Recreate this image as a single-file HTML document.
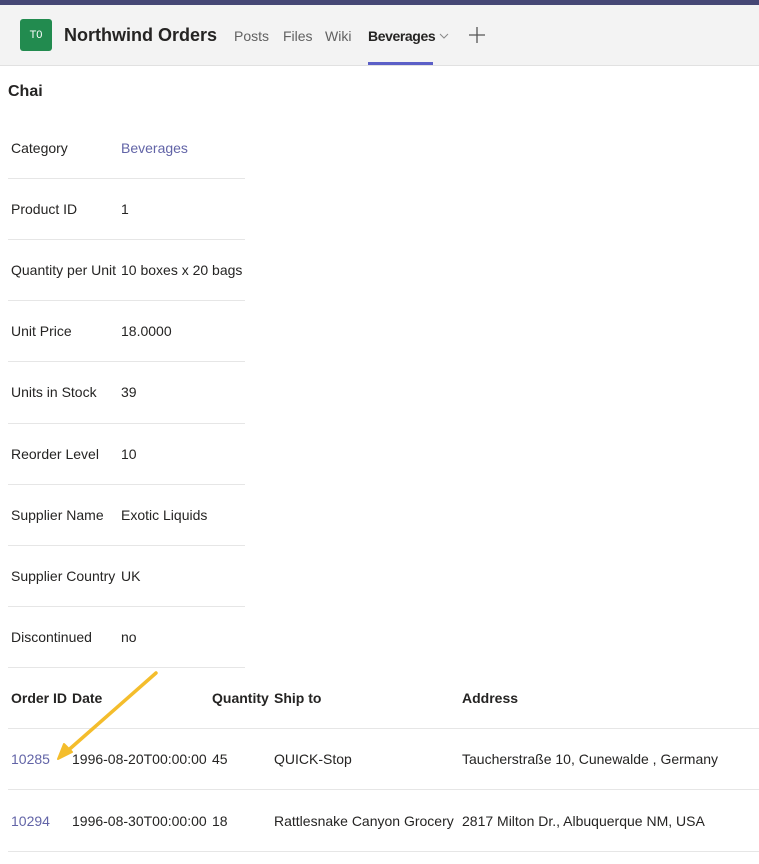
<!DOCTYPE html>
<html><head><meta charset="utf-8"><style>
body{margin:0;width:759px;height:864px;background:#fff;font-family:"Liberation Sans",Arial,sans-serif;position:relative;overflow:hidden;color:#252423}
.abs{position:absolute;white-space:nowrap}
.t{font-size:14px;line-height:16px}
.line{position:absolute;height:1px;background:#e6e6e6;left:8px}
.link{color:#6264a7}
.b{font-weight:bold}
</style></head><body>
<div class="abs" style="left:0;top:0;width:759px;height:5px;background:#464775"></div>
<div class="abs" style="left:0;top:5px;width:759px;height:60px;background:#f3f3f3;border-bottom:1px solid #e1e1e1"></div>
<div class="abs" style="left:20px;top:19px;width:32px;height:32px;background:#228b4f;border-radius:3px;color:#fff;font-size:11px;line-height:32px;text-align:center">T0</div>
<div class="abs b" style="left:64px;top:24px;font-size:18px;line-height:22px;color:#252423">Northwind Orders</div>
<div class="abs" style="left:234px;top:28px;font-size:14px;line-height:16px;color:#616161">Posts</div>
<div class="abs" style="left:283px;top:28px;font-size:14px;line-height:16px;color:#616161">Files</div>
<div class="abs" style="left:325px;top:28px;font-size:14px;line-height:16px;color:#616161">Wiki</div>
<div class="abs b" style="left:368px;top:28px;font-size:14px;line-height:16px;color:#252423;letter-spacing:-0.4px">Beverages</div>
<svg class="abs" style="left:439px;top:32px" width="10" height="8"><path d="M1 2 L5 6 L9 2" stroke="#888" fill="none" stroke-width="1"/></svg>
<svg class="abs" style="left:468px;top:26px" width="18" height="18"><path d="M9 1V17M1 9H17" stroke="#555" stroke-width="1.3"/></svg>
<div class="abs" style="left:368px;top:62px;width:65px;height:3px;background:#5b5fc7"></div>
<div class="abs b" style="left:8px;top:82px;font-size:16px;line-height:19px">Chai</div>

<div class="abs t" style="left:11px;top:140px">Category</div><div class="abs t link" style="left:121px;top:140px">Beverages</div>
<div class="line" style="top:178px;width:237px"></div>
<div class="abs t" style="left:11px;top:201px">Product ID</div><div class="abs t" style="left:121px;top:201px">1</div>
<div class="line" style="top:239px;width:237px"></div>
<div class="abs t" style="left:11px;top:262px">Quantity per Unit</div><div class="abs t" style="left:121px;top:262px">10 boxes x 20 bags</div>
<div class="line" style="top:300px;width:237px"></div>
<div class="abs t" style="left:11px;top:323px">Unit Price</div><div class="abs t" style="left:121px;top:323px">18.0000</div>
<div class="line" style="top:361px;width:237px"></div>
<div class="abs t" style="left:11px;top:384px">Units in Stock</div><div class="abs t" style="left:121px;top:384px">39</div>
<div class="line" style="top:423px;width:237px"></div>
<div class="abs t" style="left:11px;top:446px">Reorder Level</div><div class="abs t" style="left:121px;top:446px">10</div>
<div class="line" style="top:484px;width:237px"></div>
<div class="abs t" style="left:11px;top:507px">Supplier Name</div><div class="abs t" style="left:121px;top:507px">Exotic Liquids</div>
<div class="line" style="top:545px;width:237px"></div>
<div class="abs t" style="left:11px;top:568px">Supplier Country</div><div class="abs t" style="left:121px;top:568px">UK</div>
<div class="line" style="top:606px;width:237px"></div>
<div class="abs t" style="left:11px;top:629px">Discontinued</div><div class="abs t" style="left:121px;top:629px">no</div>
<div class="line" style="top:667px;width:237px"></div>

<div class="abs t b" style="left:11px;top:690px">Order ID</div>
<div class="abs t b" style="left:72px;top:690px">Date</div>
<div class="abs t b" style="left:212px;top:690px">Quantity</div>
<div class="abs t b" style="left:274px;top:690px">Ship to</div>
<div class="abs t b" style="left:462px;top:690px">Address</div>
<div class="line" style="top:728px;width:751px"></div>
<div class="abs t link" style="left:11px;top:751px">10285</div>
<div class="abs t" style="left:72px;top:751px">1996-08-20T00:00:00</div>
<div class="abs t" style="left:212px;top:751px">45</div>
<div class="abs t" style="left:274px;top:751px">QUICK-Stop</div>
<div class="abs t" style="left:462px;top:751px">Taucherstraße 10, Cunewalde , Germany</div>
<div class="line" style="top:789px;width:751px"></div>
<div class="abs t link" style="left:11px;top:813px">10294</div>
<div class="abs t" style="left:72px;top:813px">1996-08-30T00:00:00</div>
<div class="abs t" style="left:212px;top:813px">18</div>
<div class="abs t" style="left:274px;top:813px">Rattlesnake Canyon Grocery</div>
<div class="abs t" style="left:462px;top:813px">2817 Milton Dr., Albuquerque NM, USA</div>
<div class="line" style="top:851px;width:751px"></div>

<svg class="abs" style="left:0;top:0" width="759" height="864">
<path d="M156 673 L64 754" stroke="#f4bd2c" stroke-width="3.5" stroke-linecap="round"/>
<path d="M58 759 L64 744 L72 752 Z" fill="#f4bd2c" stroke="#f4bd2c" stroke-width="2" stroke-linejoin="round"/>
</svg>
</body></html>
